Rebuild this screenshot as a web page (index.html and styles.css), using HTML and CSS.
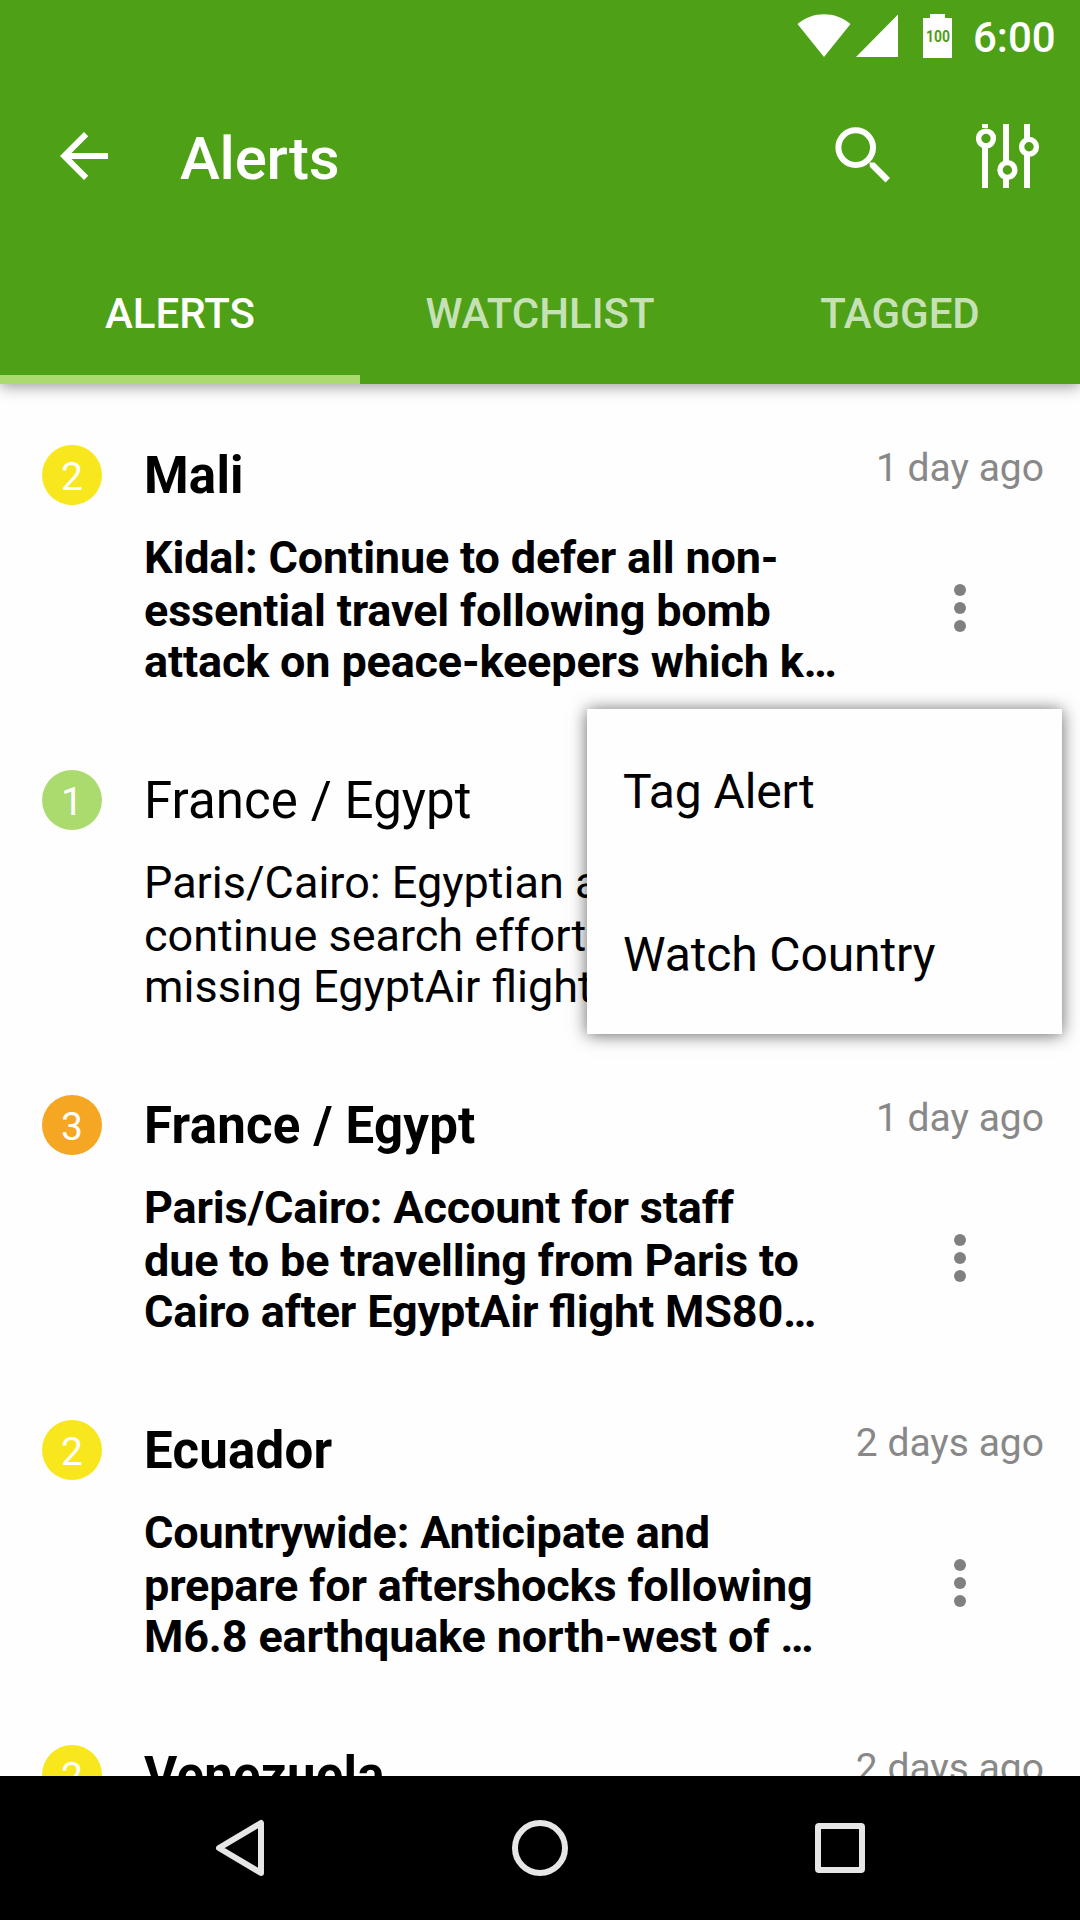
FILE: index.html
```html
<!DOCTYPE html>
<html lang="en">
<head>
  <meta charset="UTF-8">
  <meta name="viewport" content="width=device-width, initial-scale=1.0">
  <title>Alerts</title>
  <link rel="stylesheet" href="styles.css">
</head>
<body>
  <header class="header">
    <div class="status-bar">
      <svg class="wifi" width="54" height="43" viewBox="0 0 54 43"><path d="M0.5 10C16 -3 38 -3 53.5 10L27 43z" fill="#fff"/></svg>
      <svg class="signal" width="42" height="43" viewBox="0 0 42 43"><path d="M42 0.5V43H0z" fill="#fff"/></svg>
      <svg class="battery" width="29" height="44" viewBox="0 0 29 44">
        <path d="M7 0h15v4h7v40H0V4h7z" fill="#fff"/>
        <text x="3" y="28" textLength="24" lengthAdjust="spacingAndGlyphs">100</text>
      </svg>
      <span class="clock">6:00</span>
    </div>

    <div class="toolbar">
      <svg class="back" width="72" height="72" viewBox="0 0 24 24"><path d="M20 11H7.83l5.59-5.59L12 4l-8 8 8 8 1.41-1.41L7.83 13H20v-2z" fill="#fff"/></svg>
      <h1>Alerts</h1>
      <svg class="search" width="56" height="56" viewBox="0 0 56 56">
        <circle cx="20.7" cy="20.6" r="17.3" fill="none" stroke="#fff" stroke-width="6"/>
        <path d="M34.5 35.5h5L55 51l-4.5 4.5L35 40z" fill="#fff"/>
      </svg>
      <svg class="filter" width="64" height="64" viewBox="0 0 64 64" fill="none" stroke="#fff">
        <path d="M9 0v4M9 22v42M30 0v39M30 54v10M51 0v16M51 30v34" stroke-width="6"/>
        <circle cx="10" cy="14.5" r="7.4" stroke-width="5.4"/>
        <circle cx="31.4" cy="46" r="7.4" stroke-width="5.4"/>
        <circle cx="53" cy="22.8" r="7.4" stroke-width="5.4"/>
      </svg>
    </div>

    <nav class="tabs">
      <a class="tab active">ALERTS</a>
      <a class="tab">WATCHLIST</a>
      <a class="tab">TAGGED</a>
    </nav>
  </header>

  <main class="list">
    <article class="alert unread">
      <span class="badge yellow">2</span>
      <div class="info">
        <h2>Mali</h2>
        <p>Kidal: Continue to defer all non-<br>essential travel following bomb<br>attack on peace-keepers which k…</p>
      </div>
      <div class="side">
        <time>1 day ago</time>
        <div class="more"><i></i><i></i><i></i></div>
      </div>
      <div class="menu">
        <a>Tag Alert</a>
        <a>Watch Country</a>
      </div>
    </article>

    <article class="alert">
      <span class="badge green">1</span>
      <div class="info">
        <h2>France / Egypt</h2>
        <p>Paris/Cairo: Egyptian a<br>continue search effort<br>missing EgyptAir flight</p>
      </div>
    </article>

    <article class="alert unread">
      <span class="badge orange">3</span>
      <div class="info">
        <h2>France / Egypt</h2>
        <p>Paris/Cairo: Account for staff<br>due to be travelling from Paris to<br>Cairo after EgyptAir flight MS80…</p>
      </div>
      <div class="side">
        <time>1 day ago</time>
        <div class="more"><i></i><i></i><i></i></div>
      </div>
    </article>

    <article class="alert unread">
      <span class="badge yellow">2</span>
      <div class="info">
        <h2>Ecuador</h2>
        <p>Countrywide: Anticipate and<br>prepare for aftershocks following<br>M6.8 earthquake north-west of …</p>
      </div>
      <div class="side">
        <time>2 days ago</time>
        <div class="more"><i></i><i></i><i></i></div>
      </div>
    </article>

    <article class="alert unread">
      <span class="badge yellow">2</span>
      <div class="info">
        <h2>Venezuela</h2>
      </div>
      <div class="side">
        <time>2 days ago</time>
      </div>
    </article>
  </main>

  <footer class="nav-bar">
    <svg width="60" height="60" viewBox="0 0 60 60"><path d="M9 30L51 5v50z"/></svg>
    <svg width="60" height="60" viewBox="0 0 60 60"><circle cx="30" cy="30" r="25"/></svg>
    <svg width="60" height="60" viewBox="0 0 60 60"><rect x="8" y="8" width="44" height="44" rx="1"/></svg>
  </footer>
</body>
</html>
```
FILE: styles.css
```css
* {
  box-sizing: border-box;
}

body {
  margin: 0;
  height: 1920px;
  display: flex;
  flex-direction: column;
  overflow: hidden;
  font-family: Roboto, sans-serif;
  background: #fefefe;
  color: #000;
}

h1, h2, p {
  margin: 0;
}

svg {
  display: block;
  flex: none;
}

/* header */
.header {
  height: 384px;
  flex: none;
  background: #4ea017;
  color: #fff;
  box-shadow: 0 3px 14px rgba(0,0,0,0.38);
  z-index: 1;
}

.status-bar {
  height: 72px;
  display: flex;
  justify-content: flex-end;
  padding: 14px 25px 0 0;
}

.signal {
  margin-left: 5px;
}

.battery {
  margin-left: 25px;
}

.battery text {
  font-size: 16.5px;
  font-weight: 700;
  fill: #4ea017;
}

.clock {
  width: 82px;
  margin-left: 21px;
  font-size: 42px;
  font-weight: 500;
  line-height: 48px;
}

.toolbar {
  height: 168px;
  display: flex;
  align-items: center;
  padding: 0 40px 0 48px;
}

h1 {
  flex: 1;
  margin-left: 60px;
  padding-top: 5px;
  font-size: 60px;
  font-weight: 500;
  letter-spacing: -0.2px;
}

.search {
  margin-bottom: 2px;
}

.filter {
  margin-left: 85px;
}

.tabs {
  height: 144px;
  display: flex;
}

.tab {
  flex: 1;
  padding-top: 3px;
  border-bottom: 9px solid transparent;
  font-size: 42px;
  font-weight: 500;
  line-height: 141px;
  text-align: center;
  color: rgba(255,255,255,0.7);
}

.tab.active {
  color: #fff;
  border-color: #abdb6f;
}

/* alerts */
.list {
  flex: 1;
  min-height: 0;
  overflow: hidden;
}

.alert {
  position: relative;
  height: 325px;
  display: flex;
  padding: 61px 36px 0 42px;
}

.badge {
  width: 60px;
  height: 60px;
  flex: none;
  border-radius: 50%;
  font-size: 39px;
  line-height: 64px;
  text-align: center;
  color: #fff;
}

.yellow {
  background: #f8e71c;
}

.green {
  background: #abdb6f;
}

.orange {
  background: #f5a623;
}

.info {
  flex: 1;
  margin-left: 42px;
  white-space: nowrap;
}

h2 {
  font-size: 51px;
  font-weight: 400;
  line-height: 62px;
  letter-spacing: 0.08px;
}

.info p {
  margin-top: 23px;
  font-size: 45px;
  line-height: 51px;
}

.info p::first-line {
  line-height: 55px;
}

.unread h2,
.unread p {
  font-weight: 700;
}

.unread h2 {
  letter-spacing: 0.22px;
}

.unread p {
  letter-spacing: -0.17px;
  font-feature-settings: "liga" 1;
}

.side {
  display: flex;
  flex-direction: column;
  align-items: flex-end;
}

time {
  font-size: 39px;
  line-height: 46px;
  color: #888;
}

.more {
  display: flex;
  flex-direction: column;
  gap: 6px;
  margin: 93px 78px 0 0;
}

.more i {
  width: 12px;
  height: 12px;
  border-radius: 50%;
  background: #808080;
}

.menu {
  position: absolute;
  top: 325px;
  right: 18px;
  z-index: 2;
  width: 475px;
  height: 325px;
  padding: 1px 0 0 36px;
  background: #fefefe;
  box-shadow: 0 1px 16px rgba(0,0,0,0.6);
}

.menu a {
  display: block;
  font-size: 48px;
  line-height: 163px;
  letter-spacing: -0.12px;
}

/* navigation bar */
.nav-bar {
  height: 144px;
  flex: none;
  display: flex;
  justify-content: center;
  align-items: center;
  gap: 240px;
  background: #000;
}

.nav-bar svg {
  fill: none;
  stroke: #e6e6e6;
  stroke-width: 6;
  stroke-linejoin: round;
}
```
